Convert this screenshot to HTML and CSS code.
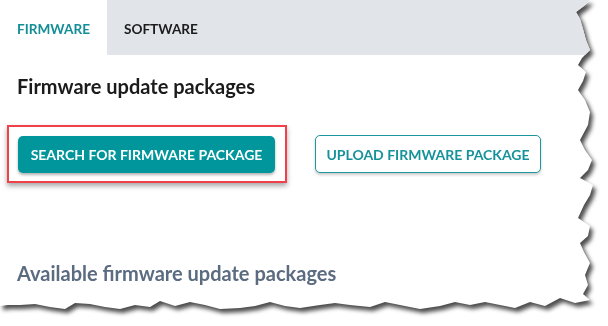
FILE: index.html
```html
<!DOCTYPE html>
<html lang="en">
<head>
  <meta charset="UTF-8" />
  <meta name="viewport" content="width=device-width, initial-scale=1.0"/>
  <title>Firmware</title>
  <link rel="stylesheet" href="styles.css">
</head>
<body>
  <div class="sheet">
    <div class="page">
      <nav class="tabs">
        <a class="tab active">FIRMWARE</a>
        <a class="tab">SOFTWARE</a>
      </nav>
      <section class="content">
        <h2 class="title">Firmware update packages</h2>
        <div class="actions">
          <span class="highlight">
            <button class="btn primary">SEARCH FOR FIRMWARE PACKAGE</button>
          </span>
          <button class="btn outline">UPLOAD FIRMWARE PACKAGE</button>
        </div>
        <h2 class="subtitle">Available firmware update packages</h2>
      </section>
    </div>
  </div>
</body>
</html>
```

FILE: styles.css
```css
body {
  margin: 0;
  background-color: #ffffff;
  font-family: Lato, "Open Sans", sans-serif;
}
.sheet {
  width: 600px;
  height: 320px;
  filter: drop-shadow(3px 4px 2px rgba(0, 0, 0, 0.7));
}
.page {
  height: 100%;
  background-color: #ffffff;
  clip-path: polygon(
    0 0, 590px 0, 584px 6px, 576px 12px, 580px 19px, 583px 29px, 586px 40px,
    590px 50px, 582px 58px, 578px 65px, 586px 72px, 583px 81px, 578px 90px,
    585px 100px, 590px 112px, 588px 125px, 580px 140px, 585px 150px,
    592px 160px, 588px 170px, 580px 178px, 593px 185px, 590px 195px,
    584px 205px, 578px 218px, 590px 226px, 588px 236px, 580px 243px,
    584px 252px, 590px 263px, 585px 275px, 588px 285px, 583px 294px,
    590px 300px, 575px 303px, 560px 298px, 545px 306px, 530px 302px,
    515px 308px, 500px 305px, 485px 302px, 470px 305px, 455px 302px,
    440px 306px, 420px 309px, 400px 305px, 385px 302px, 370px 307px,
    350px 305px, 335px 303px, 320px 305px, 300px 308px, 285px 306px,
    270px 302px, 255px 306px, 240px 308px, 220px 309px, 205px 305px,
    190px 302px, 175px 306px, 160px 301px, 150px 307px, 135px 305px,
    120px 309px, 105px 307px, 90px 304px, 75px 303px, 65px 309px,
    50px 307px, 35px 304px, 20px 305px, 8px 305px, 0 306px
  );
}
.tabs {
  display: flex;
  height: 55px;
  background-color: #e1e5e9;
}
.tab {
  display: flex;
  align-items: center;
  padding: 3px 17px 0;
  font-size: 13.6px;
  font-weight: 700;
  color: #1c1c1c;
}
.tab.active {
  background-color: #ffffff;
  color: #138e96;
}
.content {
  padding: 0 17px;
}
.title {
  margin: 19px 0 0;
  font-size: 20px;
  font-weight: 700;
  color: #1b1b1b;
}
.actions {
  display: flex;
  align-items: center;
  gap: 28px;
  margin-top: 27px;
}
.highlight {
  margin-left: -10px;
  padding: 9px 10px 8px 9px;
  border: 2px solid #f0414b;
  box-shadow: 0 3px 5px rgba(0, 0, 0, 0.35);
}
.btn {
  height: 37px;
  padding: 0;
  border-radius: 5px;
  font-family: inherit;
  font-size: 14px;
  font-weight: 700;
  white-space: nowrap;
  cursor: pointer;
}
.primary {
  display: block;
  width: 257px;
  border: none;
  background-color: #00969c;
  color: #ffffff;
  box-shadow: 0 2px 3px rgba(0, 0, 0, 0.3);
}
.outline {
  width: 226px;
  height: 38px;
  border: 1.5px solid #1a969c;
  background-color: #ffffff;
  color: #16939a;
  box-shadow: 0 2px 3px rgba(0, 0, 0, 0.2);
}
.subtitle {
  margin: 78px 0 0;
  font-size: 20px;
  font-weight: 700;
  color: #5b6b80;
}
```
